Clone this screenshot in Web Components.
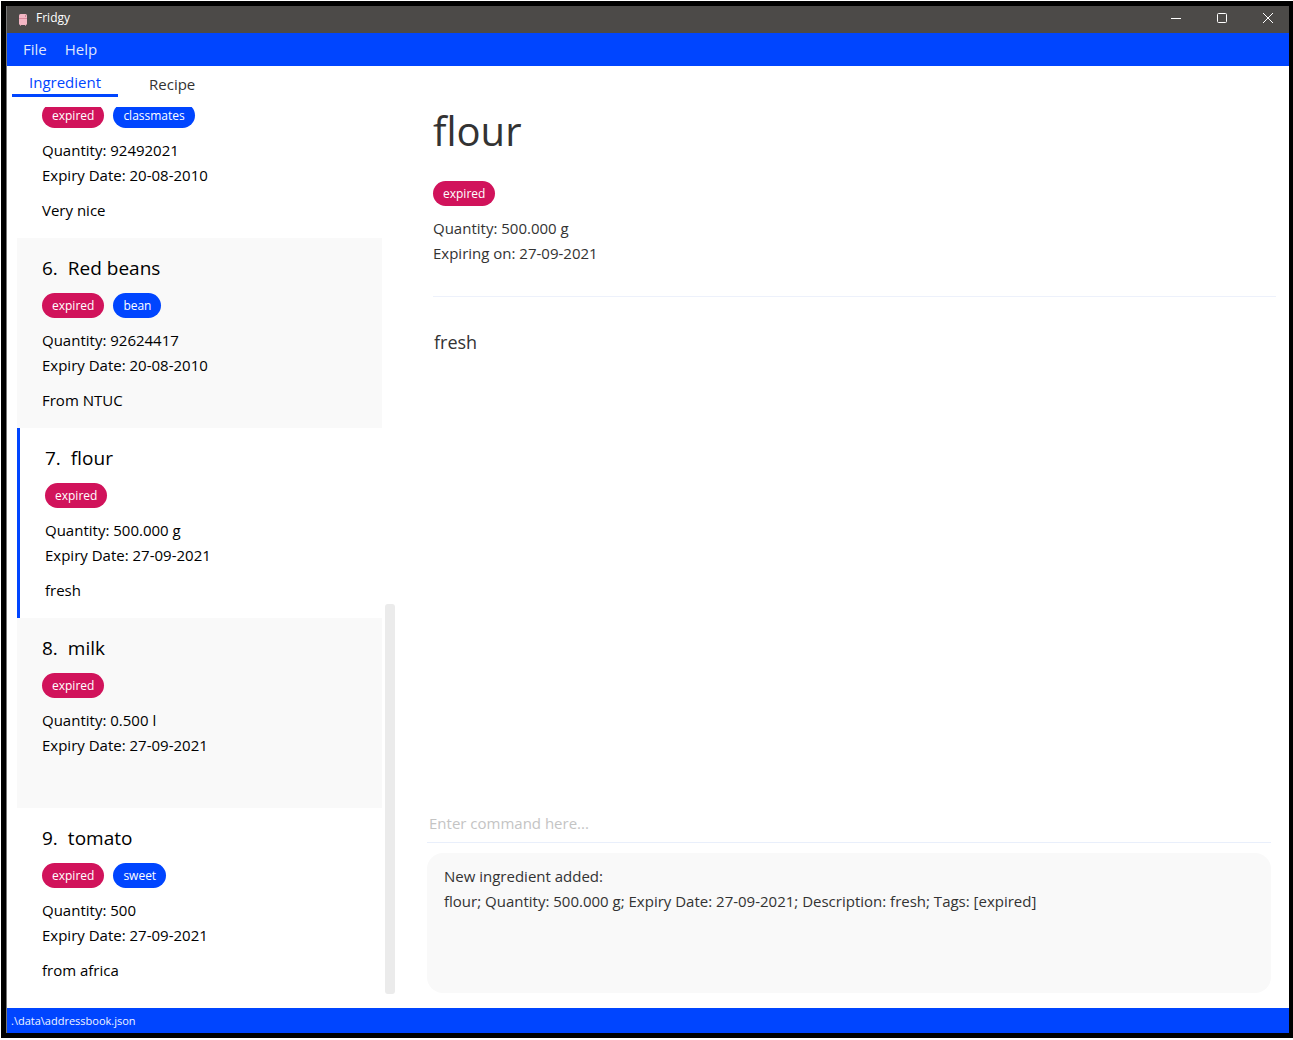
<!DOCTYPE html>
<html lang="en">
<head>
<meta charset="utf-8">
<title>Fridgy</title>
<style>
  html, body { height: 100%; margin: 0; background: #fff; }
  body {
    --blue: #0045ff; --red: #d1135b; --soft: #f9f9f9;
    font: 15px/25px "Open Sans", "Noto Sans", sans-serif;
    color: #333;
  }
</style>
</head>
<body>
<fridgy-window>
  <title-bar slot="top">Fridgy</title-bar>
  <menu-bar slot="top"></menu-bar>
  <side-panel slot="side">
    <ingredient-card tags="expired,classmates" quantity="92492021" expiry="20-08-2010" note="Very nice"></ingredient-card>
    <ingredient-card shaded number="6" name="Red beans" tags="expired,bean" quantity="92624417" expiry="20-08-2010" note="From NTUC"></ingredient-card>
    <ingredient-card selected number="7" name="flour" tags="expired" quantity="500.000 g" expiry="27-09-2021" note="fresh"></ingredient-card>
    <ingredient-card shaded number="8" name="milk" tags="expired" quantity="0.500 l" expiry="27-09-2021"></ingredient-card>
    <ingredient-card number="9" name="tomato" tags="expired,sweet" quantity="500" expiry="27-09-2021" note="from africa"></ingredient-card>
  </side-panel>
  <ingredient-detail slot="main"></ingredient-detail>
  <command-box slot="main"></command-box>
  <result-display slot="main"><div>New ingredient added:</div><div>flour; Quantity: 500.000 g; Expiry Date: 27-09-2021; Description: fresh; Tags: [expired]</div></result-display>
  <status-bar slot="bottom">.\data\addressbook.json</status-bar>
</fridgy-window>
<script>
  const define = (name, html) => customElements.define(name, class extends HTMLElement {
    constructor() {
      super();
      this.attachShadow({ mode: "open" }).innerHTML = html;
    }
  });

  customElements.define("tag-chip", class extends HTMLElement {
    connectedCallback() {
      if (this.shadowRoot) return;
      this.attachShadow({ mode: "open" }).innerHTML = `
        <style>
          :host { display: block; padding: 0 10px; border-radius: 13px; background: var(--blue); color: #fff; font-size: 12px; line-height: 25px; }
          :host([kind="expired"]) { background: var(--red); }
        </style><slot></slot>`;
    }
  });

  customElements.define("ingredient-card", class extends HTMLElement {
    connectedCallback() {
      if (this.shadowRoot) return;
      const get = key => this.getAttribute(key) || "";
      const chips = get("tags").split(",").map(t => `<tag-chip kind="${t}">${t}</tag-chip>`).join("");
      const title = get("name") ? `<h2><span>${get("number")}.</span><span>${get("name")}</span></h2>` : "";
      this.setAttribute("role", "listitem");
      this.attachShadow({ mode: "open" }).innerHTML = `
        <style>
          :host { display: flex; flex-direction: column; flex: none; gap: 10px; padding: 15px 25px; color: #000; }
          :host([shaded]) { background: var(--soft); }
          :host([selected]) { border-left: 3px solid var(--blue); }
          h2 { display: flex; gap: 10px; margin: 0; font-size: 19px; line-height: 30px; font-weight: 400; }
          .tags { display: flex; gap: 9px; }
          .note { min-height: 25px; }
        </style>
        ${title}
        <div class="tags">${chips}</div>
        <div><div>Quantity: ${get("quantity")}</div><div>Expiry Date: ${get("expiry")}</div></div>
        <div class="note">${get("note")}</div>`;
    }
  });

  define("title-bar", `
    <style>
      :host { display: flex; align-items: center; height: 27px; padding-left: 11px; background: #4c4a48; color: #fff; font-size: 12px; line-height: 24px; }
      .logo { display: block; margin-right: 7px; }
      .name { flex: 1; padding-bottom: 3px; }
      .buttons { display: flex; gap: 4px; height: 25px; }
      button { display: grid; place-items: center; width: 42px; border: 0; padding: 0 0 3px; background: none; color: #fff; }
      svg { display: block; }
    </style>
    <svg class="logo" width="11" height="12" viewBox="0 0 11 12" aria-hidden="true">
      <rect x="1" width="8" height="11" rx="1.5" fill="#f3b6c4"/>
      <path d="M1 4.5h8" stroke="#d98a9e" stroke-width="1"/>
      <path d="M7.5 1v2" stroke="#c98a98" stroke-width="1"/>
      <path d="M2 11.500h1M7 11.500h1" stroke="#b98793"/>
    </svg>
    <span class="name"><slot></slot></span>
    <div class="buttons">
      <button aria-label="Minimize"><svg width="10" height="10"><path d="M0 5.500h10" stroke="#fff"/></svg></button>
      <button aria-label="Maximize"><svg width="10" height="10"><rect x=".5" y=".5" width="9" height="9" rx="1" fill="none" stroke="#fff"/></svg></button>
      <button aria-label="Close"><svg width="10" height="10"><path d="M0 0l10 10M10 0L0 10" stroke="#fff"/></svg></button>
    </div>`);

  define("menu-bar", `
    <style>
      :host { display: flex; height: 33px; padding-left: 7px; background: var(--blue); }
      button { border: 0; padding: 0 9px; background: none; color: #dfe6fb; font: inherit; }
    </style>
    <button>File</button><button>Help</button>`);

  define("side-panel", `
    <style>
      :host { display: flex; flex-direction: column; min-height: 0; }
      [role="tablist"] { display: flex; gap: 14px; height: 31px; padding: 0 5px 10px; }
      button { border: 0; padding: 6px 17px 0; background: none; color: #333; font: inherit; }
      button[aria-selected="true"] { border-bottom: 3px solid var(--blue); padding-top: 4px; color: var(--blue); }
      .body { display: flex; flex: 1; min-height: 0; gap: 3px; padding: 0 3px 10px 10px; }
      .list { display: flex; flex: 1; flex-direction: column; justify-content: flex-end; overflow: hidden; }
      .track { display: flex; flex-direction: column; justify-content: flex-end; width: 10px; padding-bottom: 4px; }
      .thumb { height: 44%; border-radius: 3px; background: #ebebeb; }
    </style>
    <div role="tablist">
      <button role="tab" aria-selected="true">Ingredient</button>
      <button role="tab" aria-selected="false">Recipe</button>
    </div>
    <div class="body">
      <div class="list" role="list"><slot></slot></div>
      <div class="track"><div class="thumb"></div></div>
    </div>`);

  define("ingredient-detail", `
    <style>
      :host { display: flex; flex: 1; flex-direction: column; padding: 0 13px 0 35px; }
      h1 { margin: 0 0 20px; padding-top: 35px; font-size: 40px; line-height: 60px; font-weight: 400; }
      .tags { display: flex; margin-bottom: 10px; }
      .facts { padding-bottom: 30px; border-bottom: 1px solid #edf1fb; }
      p { margin: 30px 1px 0; font-size: 18px; line-height: 30px; }
    </style>
    <h1>flour</h1>
    <div class="tags"><tag-chip kind="expired">expired</tag-chip></div>
    <div class="facts"><div>Quantity: 500.000 g</div><div>Expiring on: 27-09-2021</div></div>
    <p>fresh</p>`);

  define("command-box", `
    <style>
      :host { display: flex; margin: 0 18px 10px 29px; }
      input { flex: 1; height: 38px; box-sizing: border-box; border: 0; border-bottom: 1px solid #e9effb; padding: 0 2px 2px; background: none; color: #333; font: inherit; outline: 0; }
      input::placeholder { color: #c4c4c4; opacity: 1; }
    </style>
    <input type="text" aria-label="Command" placeholder="Enter command here...">`);

  define("result-display", `
    <style>
      :host { display: flex; margin: 0 18px 15px 29px; }
      output { flex: 1; min-height: 118px; padding: 11px 17px; border-radius: 16px; background: var(--soft); }
    </style>
    <output><slot></slot></output>`);

  define("status-bar", `
    <style>
      :host { display: block; padding: 0 4px; background: var(--blue); color: #f2f5ff; font-size: 11px; line-height: 25px; }
    </style>
    <slot></slot>`);

  define("fridgy-window", `
    <style>
      :host { display: flex; flex-direction: column; box-sizing: border-box; height: 100vh; padding: 1px 0 2px 1px; }
      .frame { display: flex; flex: 1; flex-direction: column; min-height: 0; border: 5px solid #000; border-right-width: 4px; background: #000; }
      .window { display: flex; flex: 1; flex-direction: column; min-height: 0; border-left: 1px solid #777; background: #fff; }
      .content { display: grid; flex: 1; grid-template-columns: 391px 1fr; grid-template-rows: minmax(0, 1fr); min-height: 0; }
      main { display: flex; flex-direction: column; min-width: 0; }
      aside { display: grid; min-height: 0; }
    </style>
    <div class="frame"><div class="window">
      <header><slot name="top"></slot></header>
      <div class="content">
        <aside><slot name="side"></slot></aside>
        <main><slot name="main"></slot></main>
      </div>
      <footer><slot name="bottom"></slot></footer>
    </div></div>`);
</script>
</body>
</html>
